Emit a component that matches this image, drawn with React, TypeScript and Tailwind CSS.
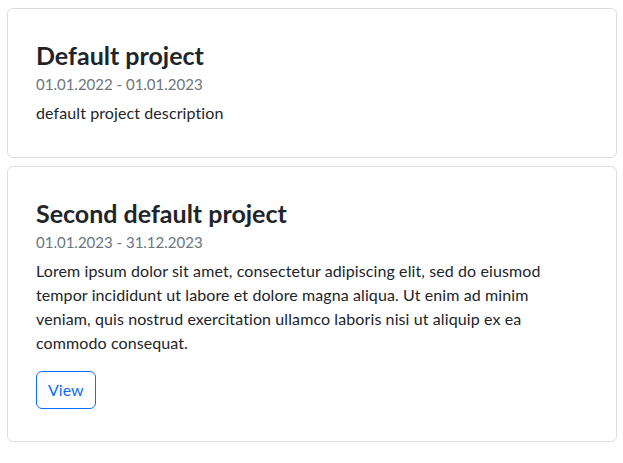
type Project = {
  id: number;
  name: string;
  dates: string;
  description: string[];
  showView?: boolean;
};

const PROJECTS: Project[] = [
  {
    id: 1,
    name: "Default project",
    dates: "01.01.2022 - 01.01.2023",
    description: ["default project description"],
  },
  {
    id: 2,
    name: "Second default project",
    dates: "01.01.2023 - 31.12.2023",
    description: [
      "Lorem ipsum dolor sit amet, consectetur adipiscing elit, sed do eiusmod",
      "tempor incididunt ut labore et dolore magna aliqua. Ut enim ad minim",
      "veniam, quis nostrud exercitation ullamco laboris nisi ut aliquip ex ea",
      "commodo consequat.",
    ],
    showView: true,
  },
];

function ProjectCard({ project }: { project: Project }) {
  return (
    <div className="rounded-[6px] border border-[#dadcdf] bg-white pl-[28px] pr-[30px] py-[32px]">
      <h4 className="text-[25px] font-bold leading-[29px] text-[#212529]">{project.name}</h4>
      <div className="mt-[2px] text-[15px] leading-6 text-[#6c757d]">{project.dates}</div>
      <p className="mt-[5px] text-[16px] leading-6 tracking-[0.1px] text-[#212529]">
        {project.description.map((line, i) => (
          <span key={i}>
            {line}
            {i < project.description.length - 1 && <br />}
          </span>
        ))}
      </p>
      {project.showView && (
        <button className="mt-4 rounded-[6px] border border-[#0d6efd] px-[11px] py-[6px] text-[16px] leading-6 text-[#0d6efd]">
          View
        </button>
      )}
    </div>
  );
}

export default function App() {
  return (
    <div className="flex min-h-screen flex-col gap-2 bg-white pl-[7px] pr-[6px] pt-2" style={{ fontFamily: "Lato, sans-serif" }}>
      {PROJECTS.map((p) => (
        <ProjectCard key={p.id} project={p} />
      ))}
    </div>
  );
}
